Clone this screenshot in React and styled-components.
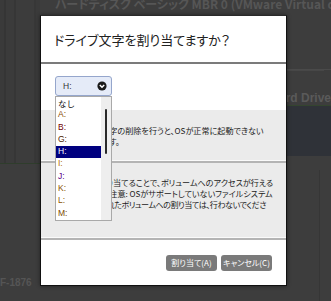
import React from "react";
import styled, { createGlobalStyle } from "styled-components";

const GlobalStyle = createGlobalStyle`
  html, body {
    margin: 0;
    padding: 0;
    background: #3c3c3c;
  }
  body {
    font-family: "Noto Sans CJK JP", "Noto Sans", sans-serif;
  }
`;

const Page = styled.div`
  position: relative;
  width: 331px;
  height: 301px;
  overflow: hidden;
  display: flex;
  background: #3d3d3d;
`;

/* 背景のディスク管理画面（ぼんやり見えている部分） */
const LeftRail = styled.div`
  width: 40px;
  flex: none;
  display: flex;
  flex-direction: column;
`;

const StripeBlock = styled.div`
  height: 163px;
  border-bottom: 1px solid #2f3d2c;
  background: linear-gradient(
    90deg,
    #3a3a3a 0 4px,
    #353535 4px 6px,
    #3b3b3b 6px 14px,
    #363636 14px 16px,
    #3c3c3c 16px 34px,
    #373737 34px 36px,
    #3a3a3a 36px
  );
`;

const RailFoot = styled.div`
  flex: 1;
  display: flex;
  align-items: flex-end;
  padding-bottom: 13px;
  color: #555;
  font: bold 10px "Liberation Sans", sans-serif;
  white-space: nowrap;
  overflow: hidden;
`;

const MainArea = styled.div`
  flex: 1;
  display: flex;
  flex-direction: column;
  min-width: 0;
`;

const DiskTitle = styled.div`
  height: 12px;
  padding-left: 15px;
  margin-top: -3px;
  color: #565656;
  font-size: 12px;
  font-weight: bold;
  white-space: nowrap;
  line-height: 14px;
  font-feature-settings: "palt";
`;

const InfoRows = styled.div`
  margin-top: 40px;
  height: 20px;
  border-bottom: 1px solid #4a4a4a;
  box-shadow: 0 8px 0 -7px #474747;
`;

const DriveHeading = styled.div`
  margin-top: 21px;
  height: 14px;
  line-height: 14px;
  padding-left: 195px;
  color: #5a5a5a;
  font: bold 12px "Liberation Sans", sans-serif;
  white-space: nowrap;
  overflow: hidden;
`;

const VolumeBand = styled.div`
  height: 50px;
  background: #2f3238;
  border-top: 1px solid #34452f;
`;

const VolumeList = styled.div`
  flex: 1;
  margin-top: 14px;
  border-right: 1px solid #363636;
  margin-right: 11px;
`;

/* ダイアログ */
const Dialog = styled.div`
  position: absolute;
  left: 40px;
  top: 15px;
  width: 247px;
  height: 271px;
  box-sizing: border-box;
  border: 1px solid #111;
  border-top-color: #2a2a2a;
  background: #fff;
  display: flex;
  flex-direction: column;
  box-shadow: 0 0 4px rgba(0, 0, 0, 0.45);
`;

const DialogHeader = styled.div`
  height: 46px;
  flex: none;
  display: flex;
  align-items: center;
  padding-left: 13px;
  border-bottom: 2px solid #7b7b7b;
  color: #222;
  font-size: 13px;
  font-feature-settings: "palt";
`;

const SelectArea = styled.div`
  padding: 12px 14px 14px;
  flex: none;
`;

const SelectWrap = styled.div`
  position: relative;
  width: 57px;
`;

const SelectBox = styled.div`
  height: 20px;
  box-sizing: border-box;
  border: 1px solid #95a6cc;
  border-radius: 3px;
  background: #e5ebf8;
  display: flex;
  align-items: center;
  justify-content: space-between;
  padding: 0 4px 0 7px;
  color: #333;
  font: 8.5px "Liberation Sans", sans-serif;
`;

const ChevronCircle = () => (
  <svg width="10" height="10" viewBox="0 0 10 10">
    <circle cx="5" cy="5" r="4.6" fill="#1a1a1a" />
    <path d="M2.8 4 L5 6.2 L7.2 4" fill="none" stroke="#fff" strokeWidth="1.5" />
  </svg>
);

const ListBox = styled.div`
  position: absolute;
  top: 100%;
  left: 0;
  width: 57px;
  height: 125px;
  box-sizing: border-box;
  border: 1px solid #a9a9a9;
  background: #fff;
  display: flex;
  z-index: 2;
`;

const Items = styled.div`
  flex: 1;
  display: flex;
  flex-direction: column;
`;

const Item = styled.div`
  height: 12.4px;
  line-height: 12.4px;
  padding-left: 2px;
  font: 8.5px "Liberation Sans", "Noto Sans CJK JP", sans-serif;
  color: ${(p) => (p.$selected ? "#fff" : p.$color || "#111")};
  background: ${(p) => (p.$selected ? "#00007f" : "transparent")};
`;

const ScrollTrack = styled.div`
  width: 10px;
  background: #eeeeee;
  display: flex;
  justify-content: center;
  padding-top: 12px;
`;

const ScrollThumb = styled.div`
  width: 2px;
  height: 45px;
  background: #2a2a2a;
  border-radius: 1px;
`;

const Notice = styled.div`
  height: ${(p) => p.$height}px;
  flex: none;
  box-sizing: border-box;
  padding: ${(p) => p.$padTop}px 14px 0 14px;
  background: #ebebeb;
  border-bottom: 2px solid #b4b4b4;
  box-shadow: inset 0 -1px 0 #fafafa;
  overflow: hidden;
`;

const NoticeLine = styled.div`
  white-space: nowrap;
  color: #222;
  font-size: 8.1px;
  line-height: 11px;
  letter-spacing: ${(p) => p.$spacing || 0}px;
  font-feature-settings: "palt";
`;

const Footer = styled.div`
  flex: 1;
  display: flex;
  justify-content: flex-end;
  align-items: flex-start;
  gap: 4px;
  padding: 15px 14px 0;
`;

const Button = styled.button`
  width: 51px;
  height: 16px;
  padding: 0;
  border: none;
  border-radius: 3px;
  background: #7a7a7a;
  color: #fff;
  font-family: "Noto Sans CJK JP", sans-serif;
  font-size: 8px;
  font-feature-settings: "palt";
  line-height: 16px;
`;

const drives = [
  { label: "なし" },
  { label: "A:", color: "#8a4b00" },
  { label: "B:", color: "#6e0000" },
  { label: "G:", color: "#4a2200" },
  { label: "H:", selected: true },
  { label: "I:", color: "#b06a00" },
  { label: "J:", color: "#5b0088" },
  { label: "K:", color: "#8a5200" },
  { label: "L:", color: "#8a5200" },
  { label: "M:", color: "#7a4600" },
];

export default function App() {
  return (
    <>
      <GlobalStyle />
      <Page>
        <LeftRail>
          <StripeBlock />
          <RailFoot>F-1876</RailFoot>
        </LeftRail>
        <MainArea>
          <DiskTitle>ハードディスク ベーシック MBR 0 (VMware Virtual disk)</DiskTitle>
          <InfoRows />
          <DriveHeading>Basic Hard Drive</DriveHeading>
          <VolumeBand />
          <VolumeList />
        </MainArea>

        <Dialog>
          <DialogHeader>ドライブ文字を割り当てますか？</DialogHeader>
          <SelectArea>
            <SelectWrap>
              <SelectBox>
                <span>H:</span>
                <ChevronCircle />
              </SelectBox>
              <ListBox>
                <Items>
                  {drives.map((d) => (
                    <Item key={d.label} $selected={d.selected} $color={d.color}>
                      {d.label}
                    </Item>
                  ))}
                </Items>
                <ScrollTrack>
                  <ScrollThumb />
                </ScrollTrack>
              </ListBox>
            </SelectWrap>
          </SelectArea>
          <Notice $height={53} $padTop={15}>
            <NoticeLine>OSのドライブ文字の削除を行うと、OSが正常に起動できない</NoticeLine>
            <NoticeLine>可能性があります。</NoticeLine>
          </Notice>
          <Notice $height={77} $padTop={14}>
            <NoticeLine>ドライブ名を割り当てることで、ボリュームへのアクセスが行える</NoticeLine>
            <NoticeLine>ようになります。注意: OSがサポートしていないファイルシステム</NoticeLine>
            <NoticeLine $spacing={-0.5}>でフォーマットされたボリュームへの割り当ては、行わないでくださ</NoticeLine>
          </Notice>
          <Footer>
            <Button>割り当て(A)</Button>
            <Button>キャンセル(C)</Button>
          </Footer>
        </Dialog>
      </Page>
    </>
  );
}
